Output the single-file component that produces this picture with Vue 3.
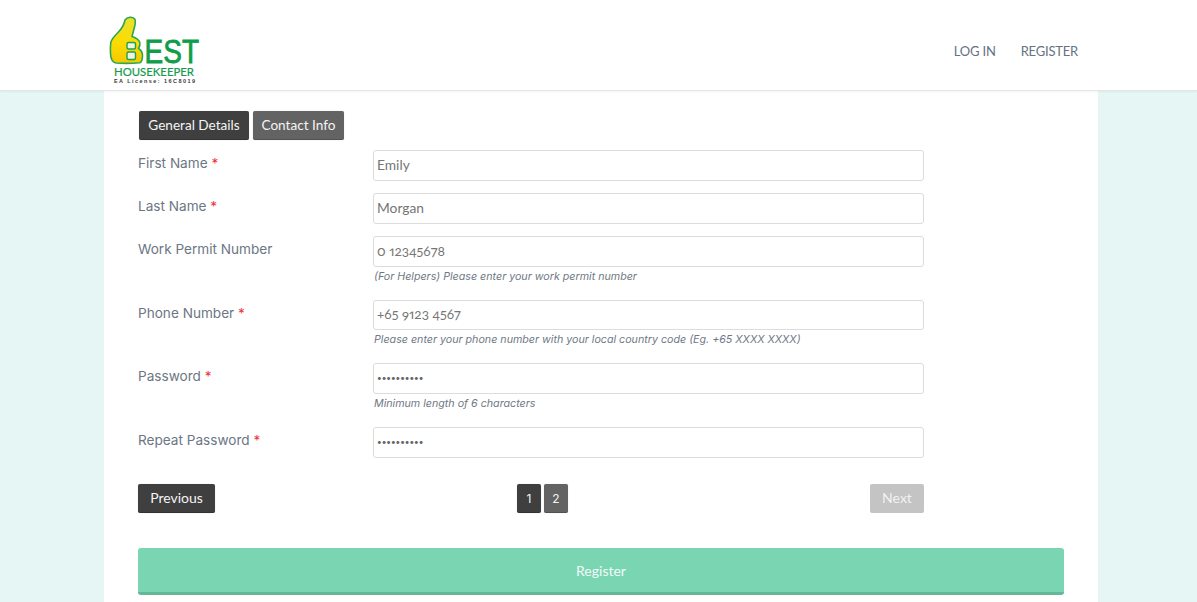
<script setup>
const fields = [
  { label: 'First Name', req: true, value: 'Emily', type: 'text' },
  { label: 'Last Name', req: true, value: 'Morgan', type: 'text' },
  { label: 'Work Permit Number', req: false, value: '0 12345678', type: 'text', digits: true, help: '(For Helpers) Please enter your work permit number' },
  { label: 'Phone Number', req: true, value: '+65 9123 4567', type: 'text', digits: true, help: 'Please enter your phone number with your local country code (Eg. +65 XXXX XXXX)' },
  { label: 'Password', req: true, value: 'abcdefghij', type: 'password', help: 'Minimum length of 6 characters' },
  { label: 'Repeat Password', req: true, value: 'abcdefghij', type: 'password' },
]
</script>

<template>
  <div class="page">
    <header class="topbar">
      <div class="logo">
        <svg width="92" height="71" viewBox="0 0 92 71">
          <defs>
            <linearGradient id="thumb" x1="0" y1="0" x2="0" y2="1">
              <stop offset="0" stop-color="#e8e030" />
              <stop offset="0.55" stop-color="#fbdc00" />
              <stop offset="1" stop-color="#f5c800" />
            </linearGradient>
          </defs>
          <path d="M17 6C19 3 25 2 27 5.500C28.500 9 25.500 16 24 22.500C27 23.500 31 25 31.800 28.500C32.300 31 31.500 33 30.500 34.500C33 36 34.500 38 34.500 41.500C34.500 45 34 47.500 32 48.700C24 49.500 14 49.500 8 49C4.500 48.300 2.800 45 2.500 40C2.300 36 2.300 32 2.800 28.500C3.500 25.500 6 22.500 10 18.500C13 15.500 16 11 17 6Z" fill="url(#thumb)" stroke="#2aa850" stroke-width="1.600" stroke-linejoin="round" />
          <rect x="19" y="28.500" width="8.500" height="6.500" rx="1.500" fill="#eef6df" stroke="#1f9f50" stroke-width="1.400" />
          <rect x="19" y="38" width="8.500" height="7.500" rx="1.500" fill="#eef6df" stroke="#1f9f50" stroke-width="1.400" />
          <text x="36.500" y="49" class="logo-best" textLength="54.500" lengthAdjust="spacingAndGlyphs">EST</text>
          <text x="6" y="61.500" class="logo-house" textLength="80" lengthAdjust="spacingAndGlyphs">HOUSEKEEPER</text>
          <text x="6" y="69" class="logo-license" textLength="81" lengthAdjust="spacing">EA License: 16C8019</text>
        </svg>
      </div>
      <nav class="nav">
        <a>LOG IN</a>
        <a>REGISTER</a>
      </nav>
    </header>

    <main class="card">
      <div class="tabs">
        <button class="btn dark">General Details</button>
        <button class="btn mid">Contact Info</button>
      </div>

      <form class="form" @submit.prevent>
        <div v-for="f in fields" :key="f.label" class="row">
          <label class="label">{{ f.label }}<span v-if="f.req" class="req"> *</span></label>
          <div class="control">
            <input class="input" :class="{ pw: f.type === 'password', digits: f.digits }" :type="f.type" :value="f.value" readonly />
            <div v-if="f.help" class="help">{{ f.help }}</div>
          </div>
        </div>
      </form>

      <div class="pager">
        <button class="btn dark prev">Previous</button>
        <div class="pages">
          <button class="btn dark num">1</button>
          <button class="btn mid num">2</button>
        </div>
        <button class="btn off next">Next</button>
      </div>

      <button class="register">Register</button>
    </main>
  </div>
</template>

<style>
html, body { margin: 0; background: #e6f6f5; }
</style>

<style scoped>
.page {
  height: 602px;
  overflow: hidden;
  background: #e6f6f5;
  font-family: "Lato", "Open Sans", sans-serif;
}
.topbar {
  position: relative;
  height: 90px;
  background: #fff;
  border-bottom: 1px solid #e2e6e6;
  box-shadow: 0 1px 2px rgba(0, 0, 0, .05);
  display: flex;
  align-items: center;
  justify-content: space-between;
  padding: 0 119px 0 108px;
}
.logo { height: 71px; margin-top: 9px; }
.logo svg { display: block; overflow: visible; }
.logo-best { font: 400 33px "Liberation Sans", sans-serif; fill: #0f9d4a; stroke: #0f9d4a; stroke-width: .8px; }
.logo-house { font: 400 11px "Lato", sans-serif; fill: #149c4c; stroke: #149c4c; stroke-width: .2px; }
.logo-license { font: 700 5.500px "Liberation Sans", sans-serif; fill: #3a3a3a; }
.nav {
  display: flex;
  gap: 25px;
  color: #667284;
  font-size: 13px;
  letter-spacing: -.2px;
  margin-top: 11px;
}
.card {
  width: 994px;
  margin-left: 104px;
  height: 511px;
  background: #fff;
  padding: 20px 34px 0;
  box-sizing: border-box;
}
.tabs { display: flex; gap: 4px; margin-left: 1px; height: 29px; }
.btn {
  border: 0;
  border-radius: 2px;
  color: #f4f4f4;
  font-family: "Lato", sans-serif;
  font-size: 14px;
  line-height: 27px;
  height: 29px;
  padding: 0 0 2px;
  box-shadow: inset 0 -1px 0 rgba(0, 0, 0, .18), 0 0 1px rgba(0, 0, 0, .25);
}
.dark { background: #3f3f3f; }
.mid { background: #636363; }
.off { background: #c4c4c4; box-shadow: none; color: #f2f2f2; }
.tabs .btn { font-size: 13.600px; padding-bottom: 0; }
.tabs .btn.dark { width: 110px; }
.tabs .btn.mid { width: 91px; }
.form { margin-top: 10px; display: flex; flex-direction: column; gap: 12.400px; }
.row { display: grid; grid-template-columns: 235px 551px; }
.label {
  font-family: "Inter", sans-serif;
  font-size: 13.600px;
  line-height: 26px;
  color: #6c7684;
}
.req { color: #f0323c; }
.input {
  display: block;
  box-sizing: border-box;
  width: 551px;
  height: 30.600px;
  padding: 0 3px 1px;
  border: 1px solid #dcdcdc;
  border-radius: 3px;
  font-family: "Lato", sans-serif;
  font-size: 13.800px;
  color: #767676;
  outline: none;
  background: #fff;
}
.input.digits {
  font-size: 13.600px;
  font-variant-numeric: oldstyle-nums proportional-nums;
}
.input.pw { font-size: 8px; color: #666; }
.help {
  font-family: "Inter", sans-serif;
  font-style: italic;
  font-size: 10.700px;
  line-height: 20.700px;
  color: #6f7885;
  padding-left: 1px;
}
.pager {
  width: 786px;
  margin-top: 26.500px;
  display: flex;
  justify-content: space-between;
}
.prev { width: 77px; }
.next { width: 54px; }
.pages { display: flex; gap: 3px; }
.num { width: 24px; font-family: "Inter", sans-serif; font-size: 12px; padding-bottom: 0; }
.register {
  display: block;
  width: 926px;
  height: 47px;
  margin-top: 35px;
  border: 0;
  border-bottom: 3px solid #64b898;
  border-radius: 3px;
  background: #7ad5b3;
  color: #f2faf7;
  font-family: "Lato", sans-serif;
  font-size: 14px;
  padding: 1px 0 0;
}
</style>
